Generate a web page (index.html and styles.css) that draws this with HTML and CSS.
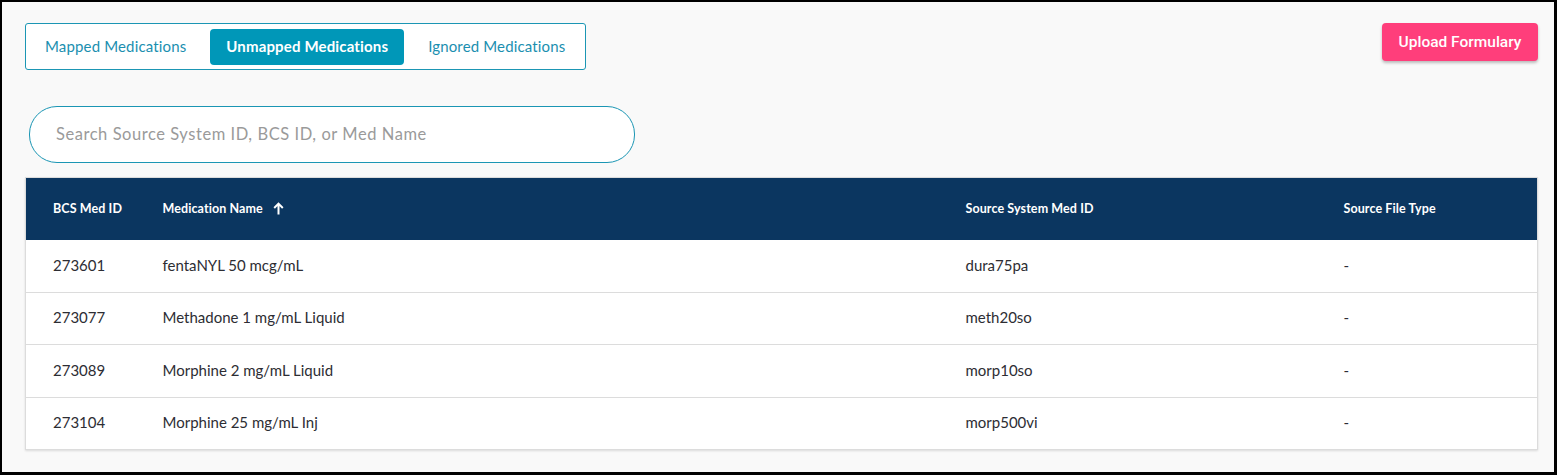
FILE: index.html
```html
<!DOCTYPE html>
<html lang="en">

<head>
    <meta charset="UTF-8" />
    <title>Formulary</title>
    <link rel="stylesheet" href="styles.css">
</head>

<body>
    <div class="frame">
        <div class="toolbar">
            <div class="tabs">
                <button class="tab">Mapped Medications</button>
                <button class="tab active">Unmapped Medications</button>
                <button class="tab">Ignored Medications</button>
            </div>
            <button class="upload-btn">Upload Formulary</button>
        </div>

        <div class="search-wrap">
            <input type="text" class="search" placeholder="Search Source System ID, BCS ID, or Med Name" />
        </div>

        <table class="meds">
            <colgroup>
                <col class="c-id">
                <col class="c-name">
                <col class="c-src">
                <col class="c-type">
            </colgroup>
            <thead>
                <tr>
                    <th>BCS Med ID</th>
                    <th>Medication Name
                        <svg class="sort" width="11" height="13" viewBox="0 0 11 13">
                            <path d="M5.5 12.5V2M1.2 6L5.5 1.6 9.8 6" fill="none" stroke="#fff" stroke-width="2" />
                        </svg>
                    </th>
                    <th>Source System Med ID</th>
                    <th>Source File Type</th>
                </tr>
            </thead>
            <tbody>
                <tr>
                    <td>273601</td>
                    <td>fentaNYL 50 mcg/mL</td>
                    <td>dura75pa</td>
                    <td>-</td>
                </tr>
                <tr>
                    <td>273077</td>
                    <td>Methadone 1 mg/mL Liquid</td>
                    <td>meth20so</td>
                    <td>-</td>
                </tr>
                <tr>
                    <td>273089</td>
                    <td>Morphine 2 mg/mL Liquid</td>
                    <td>morp10so</td>
                    <td>-</td>
                </tr>
                <tr>
                    <td>273104</td>
                    <td>Morphine 25 mg/mL Inj</td>
                    <td>morp500vi</td>
                    <td>-</td>
                </tr>
            </tbody>
        </table>
    </div>
</body>

</html>
```

FILE: styles.css
```css
* {
    margin: 0;
    padding: 0;
    box-sizing: border-box;
}

body {
    background: #000;
    font-family: 'Lato', 'Liberation Sans', sans-serif;
    color: #333;
}

.frame {
    height: 475px;
    overflow: hidden;
    border-style: solid;
    border-color: #000;
    border-width: 2px 3px 3px 2px;
    background: #f9f9f9;
    padding: 21px 16px 0 23px;
}

.toolbar {
    display: flex;
    justify-content: space-between;
    align-items: flex-start;
}

.tabs {
    display: flex;
    align-items: center;
    gap: 8px;
    height: 47px;
    width: 561px;
    padding: 0 3px;
    border: 1px solid #1b96b4;
    border-radius: 3px;
    background: #fff;
}

.tab {
    flex-shrink: 0;
    white-space: nowrap;
    border: none;
    background: none;
    font-family: inherit;
    font-size: 15px;
    letter-spacing: 0.15px;
    color: #1b8fb0;
    height: 36px;
    padding: 0 16px 2px;
    border-radius: 4px;
    cursor: pointer;
}

.tab.active {
    background: #0097b8;
    color: #fff;
    font-weight: 700;
}

.upload-btn {
    border: none;
    background: #ff3e7b;
    color: #fff;
    font-family: 'Roboto', sans-serif;
    font-weight: 500;
    font-size: 15.5px;
    height: 38px;
    width: 156px;
    border-radius: 4px;
    box-shadow: 0 2px 3px rgba(0, 0, 0, 0.25);
    cursor: pointer;
}

.search-wrap {
    padding: 36px 0 14px 4px;
}

.search {
    display: block;
    width: 606px;
    height: 57px;
    border: 1px solid #1b96b4;
    border-radius: 28px;
    background: #fff;
    padding: 0 26px 1px;
    font-family: inherit;
    font-size: 16.5px;
    letter-spacing: 0.55px;
    color: #333;
    outline: none;
}

.search::placeholder {
    color: #9a9a9a;
}

.meds {
    width: 1513px;
    border-collapse: collapse;
    table-layout: fixed;
    background: #fff;
    border: 1px solid #dcdcdc;
    box-shadow: 0 1px 2px rgba(0, 0, 0, 0.12);
}

.c-id {
    width: 110px;
}

.c-name {
    width: 803px;
}

.c-src {
    width: 378px;
}

.meds th {
    background: #0b3660;
    color: #fff;
    font-size: 12.5px;
    font-weight: 700;
    letter-spacing: 0.1px;
    text-align: left;
    height: 62px;
    padding: 0 0 0 27px;
}

.sort {
    margin-left: 7px;
    vertical-align: -2px;
}

.meds td {
    font-size: 15px;
    color: #2d2d33;
    height: 52.5px;
    padding: 0 0 2px 27px;
    border-top: 1px solid #dcdcdc;
}

.meds tbody tr:first-child td {
    border-top: none;
}
```
